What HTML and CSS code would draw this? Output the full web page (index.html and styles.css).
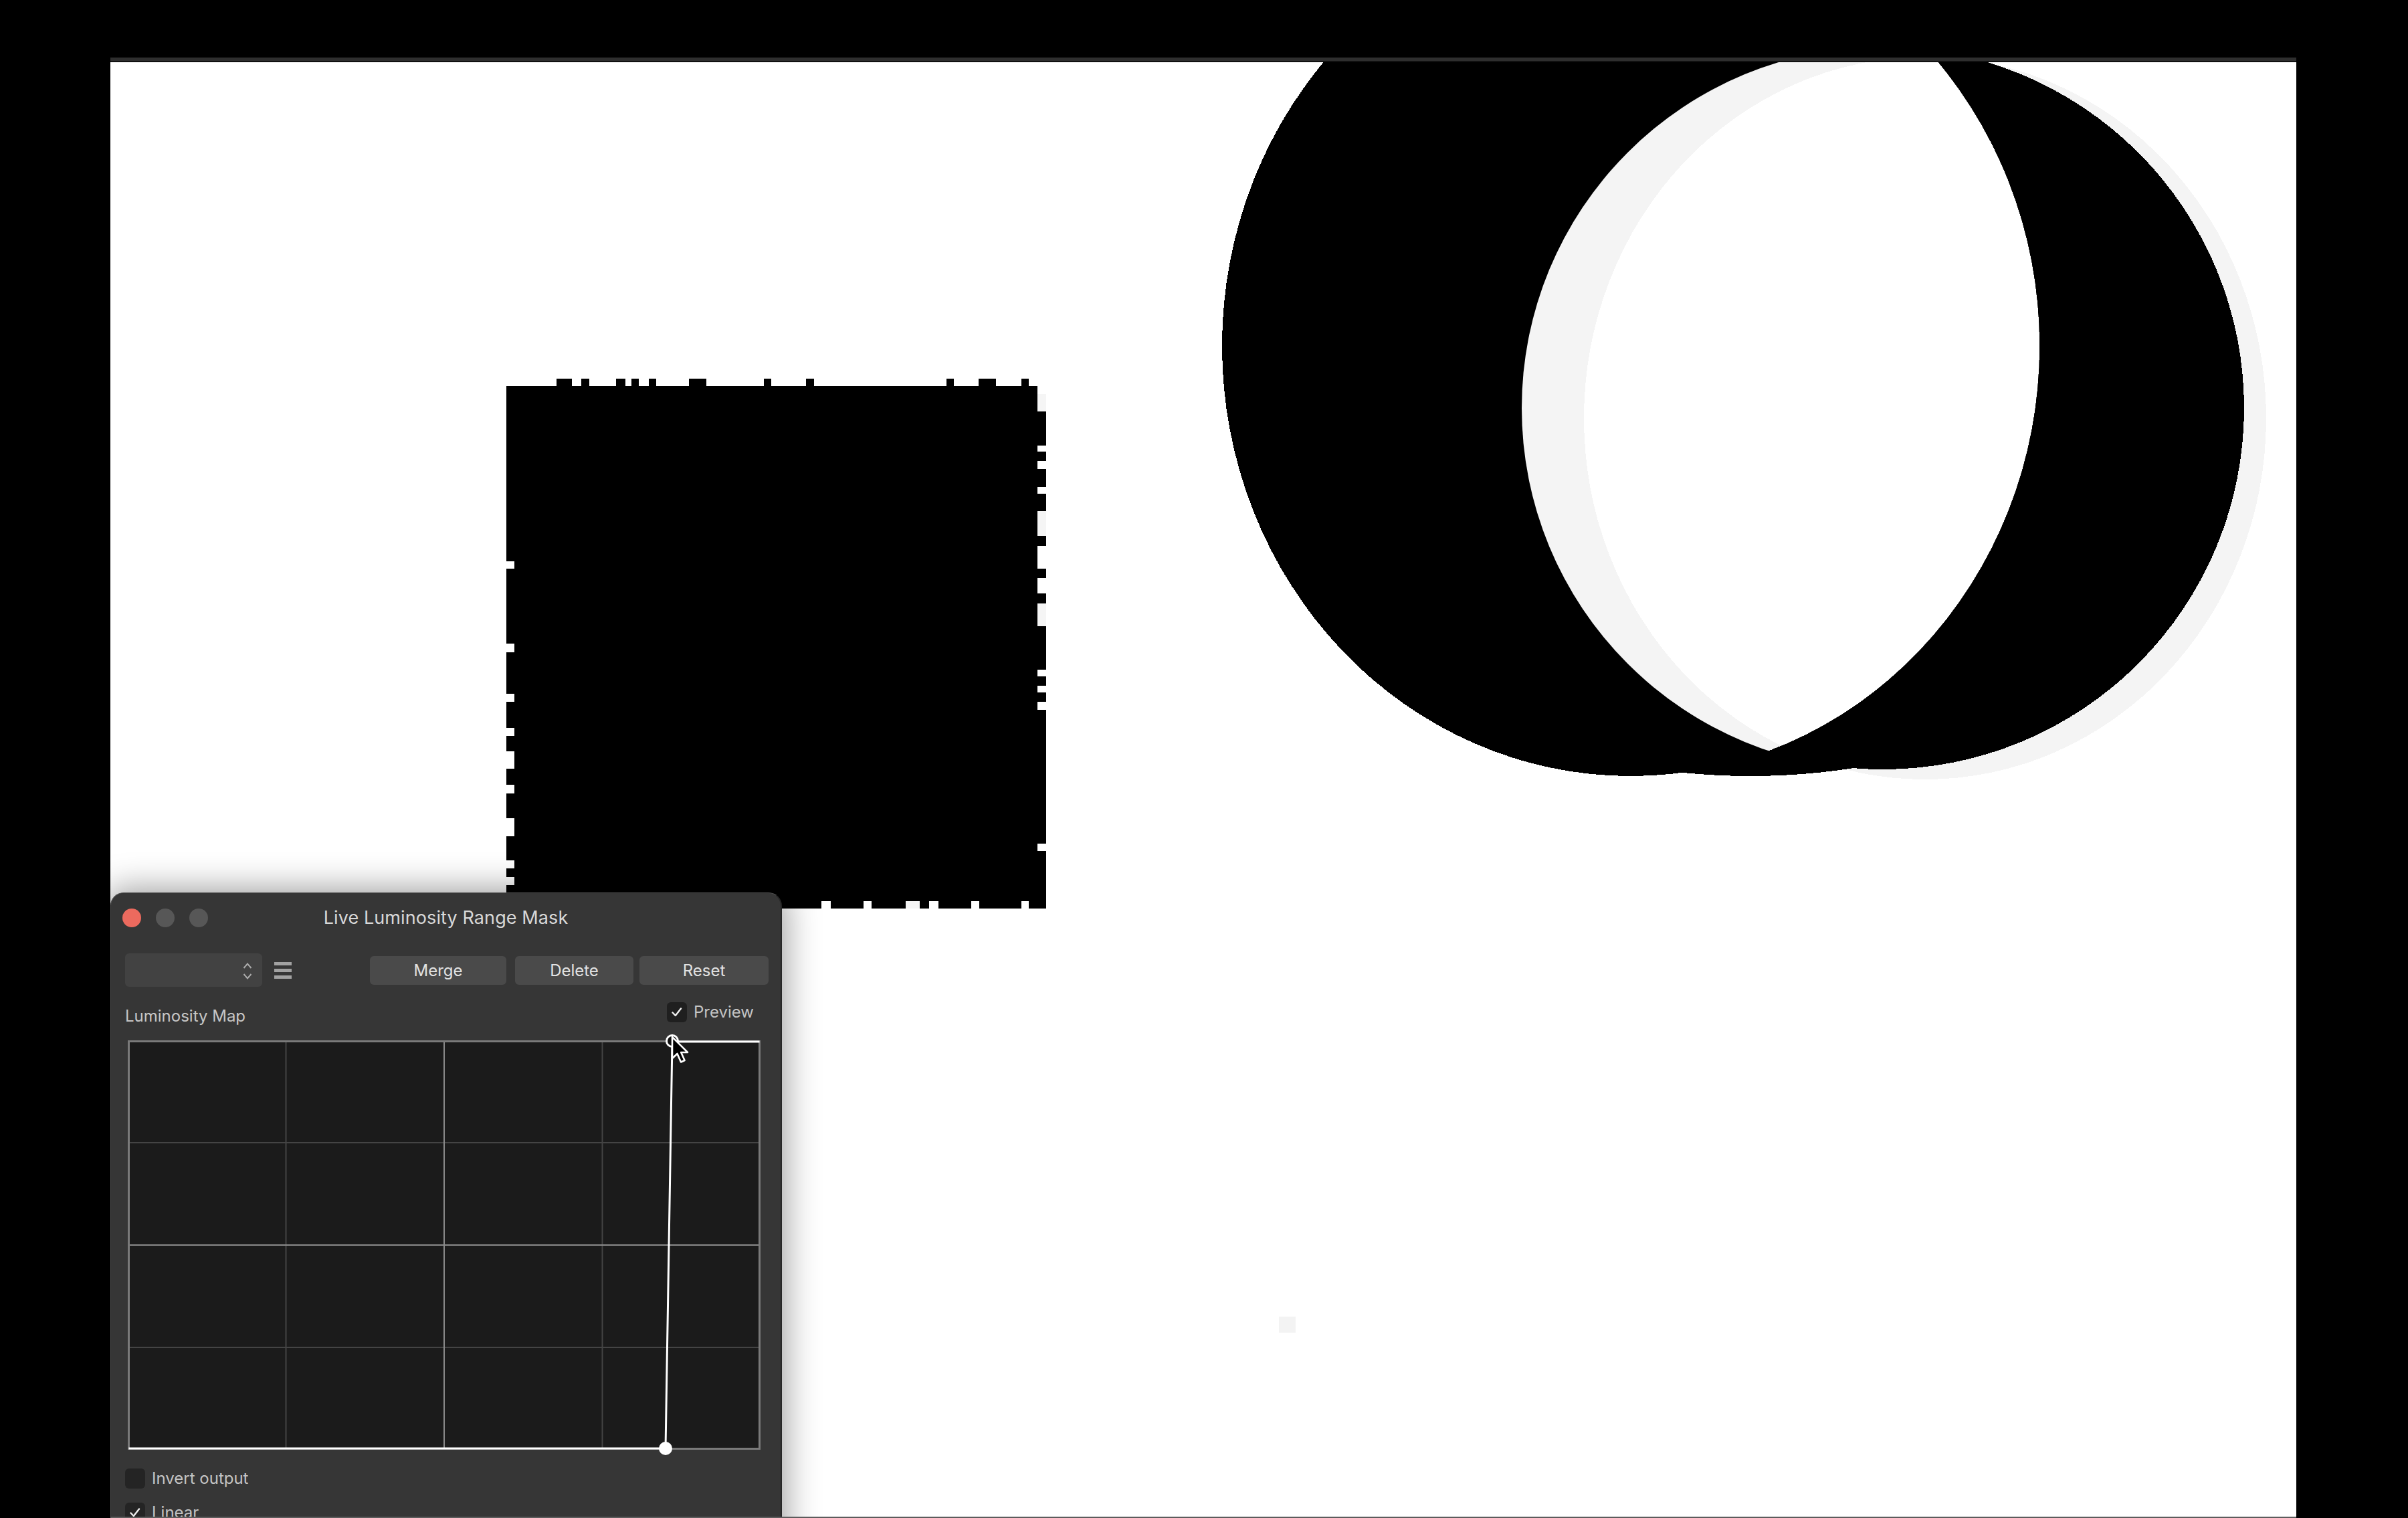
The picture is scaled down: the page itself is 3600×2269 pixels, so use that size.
FILE: index.html
```html
<!DOCTYPE html>
<html lang="en">
<head>
<meta charset="utf-8">
<title>Live Luminosity Range Mask</title>
<link rel="stylesheet" href="styles.css">
</head>
<body>
<div class="menubar"></div>
<div class="frame">
  <div class="canvas">
    <svg class="art" width="3268" height="2174" viewBox="165 93 3268 2174" xmlns="http://www.w3.org/2000/svg">
      <defs>
        <clipPath id="clipA"><ellipse cx="2438" cy="517" rx="611" ry="643"/></clipPath>
        <clipPath id="clipB"><ellipse cx="2815" cy="610" rx="540" ry="540"/></clipPath>
      </defs>
      <!-- square -->
      <g class="square" shape-rendering="crispEdges">
        <rect x="757" y="577" width="781" height="781" fill="#000"/>
        <rect x="1538" y="577" width="13" height="781" fill="#000"/>
        <rect x="1551" y="615" width="13" height="743" fill="#000"/>
        <rect x="1551" y="589" width="13" height="26" fill="#f5f5f5"/>
        <g fill="#000">
          <rect x="832" y="566" width="23" height="11"/>
          <rect x="869" y="566" width="12" height="11"/>
          <rect x="921" y="566" width="14" height="11"/>
          <rect x="944" y="566" width="11" height="11"/>
          <rect x="970" y="566" width="11" height="11"/>
          <rect x="1030" y="566" width="26" height="11"/>
          <rect x="1142" y="566" width="11" height="11"/>
          <rect x="1205" y="566" width="12" height="11"/>
          <rect x="1415" y="566" width="11" height="11"/>
          <rect x="1463" y="566" width="26" height="11"/>
          <rect x="1527" y="566" width="11" height="11"/>
        </g>
        <g fill="#fff">
          <rect x="1551" y="666" width="13" height="9"/>
          <rect x="1551" y="689" width="13" height="12"/>
          <rect x="1551" y="728" width="13" height="10"/>
          <rect x="1551" y="816" width="13" height="34"/>
          <rect x="1551" y="864" width="13" height="23"/>
          <rect x="1551" y="1001" width="13" height="10"/>
          <rect x="1551" y="1025" width="13" height="10"/>
          <rect x="1551" y="1049" width="13" height="12"/>
          <rect x="1551" y="1261" width="13" height="11"/>
          <rect x="757" y="839" width="12" height="11"/>
          <rect x="757" y="962" width="12" height="13"/>
          <rect x="757" y="1037" width="12" height="12"/>
          <rect x="757" y="1088" width="12" height="12"/>
          <rect x="757" y="1123" width="12" height="26"/>
          <rect x="757" y="1173" width="12" height="13"/>
          <rect x="757" y="1223" width="12" height="27"/>
          <rect x="757" y="1286" width="12" height="12"/>
          <rect x="757" y="1311" width="12" height="12"/>
          <rect x="1228" y="1347" width="14" height="11"/>
          <rect x="1291" y="1347" width="12" height="11"/>
          <rect x="1389" y="1347" width="14" height="11"/>
          <rect x="1452" y="1347" width="12" height="11"/>
          <rect x="1527" y="1347" width="11" height="11"/>
        </g>
        <g fill="#f5f5f5">
          <rect x="1551" y="764" width="13" height="37"/>
          <rect x="1551" y="902" width="13" height="34"/>
          <rect x="1354" y="1347" width="21" height="11"/>
        </g>
      </g>
      <!-- crescent -->
      <g shape-rendering="crispEdges">
        <ellipse cx="2878" cy="625" rx="510" ry="540" fill="#f4f4f4"/>
        <ellipse cx="2438" cy="517" rx="611" ry="643" fill="#000"/>
        <ellipse cx="2815" cy="610" rx="540" ry="540" fill="#000"/>
        <ellipse cx="2617" cy="884" rx="528" ry="276" fill="#000"/>
        <g clip-path="url(#clipB)">
          <ellipse cx="2438" cy="517" rx="611" ry="643" fill="#f4f4f4"/>
          <ellipse cx="2878" cy="625" rx="510" ry="540" fill="#fff" clip-path="url(#clipA)"/>
        </g>
      </g>
      <rect x="1912" y="1968" width="25" height="24" fill="#f3f3f3"/>
    </svg>

    <div class="panel">
      <div class="titlebar">
        <div class="lights">
          <span class="light close"></span>
          <span class="light"></span>
          <span class="light"></span>
        </div>
        <div class="title">Live Luminosity Range Mask</div>
        <div></div>
      </div>

      <div class="toolbar">
        <div class="popup">
          <svg class="stepper" width="14" height="50" viewBox="0 0 14 50">
            <path d="M1.5 22 L7 15.5 L12.5 22" fill="none" stroke="#a9a9a9" stroke-width="2"/>
            <path d="M1.5 31 L7 37.5 L12.5 31" fill="none" stroke="#a9a9a9" stroke-width="2"/>
          </svg>
        </div>
        <div class="menu-icon"><span></span><span></span><span></span></div>
        <div class="buttons">
          <button class="btn btn-merge">Merge</button>
          <button class="btn btn-delete">Delete</button>
          <button class="btn btn-reset">Reset</button>
        </div>
      </div>

      <div class="map-head">
        <div class="label">Luminosity Map</div>
        <div class="check-row">
          <span class="box">
            <svg width="30" height="30" viewBox="0 0 30 30"><path d="M8.5 15.5 L12.8 20 L21 9.5" fill="none" stroke="#efefef" stroke-width="2.4" stroke-linecap="round" stroke-linejoin="round"/></svg>
          </span>
          <span class="check-text">Preview</span>
        </div>
      </div>

      <div class="graph">
        <svg width="946" height="612" viewBox="0 0 946 612" class="graph-svg">
          <rect x="1.5" y="1.5" width="943" height="609" fill="#1b1b1b" stroke="#7a7a7a" stroke-width="3"/>
          <g stroke="#444" stroke-width="2">
            <line x1="236.5" y1="3" x2="236.5" y2="609"/>
            <line x1="709.5" y1="3" x2="709.5" y2="609"/>
            <line x1="3" y1="153" x2="943" y2="153"/>
            <line x1="3" y1="459" x2="943" y2="459"/>
          </g>
          <g stroke="#8a8a8a" stroke-width="2">
            <line x1="473" y1="3" x2="473" y2="609"/>
            <line x1="3" y1="306" x2="943" y2="306"/>
          </g>
          <polyline points="1.5,610 804,610 814,2 944.5,2" fill="none" stroke="#fff" stroke-width="3" stroke-linejoin="round"/>
          <circle cx="804" cy="610" r="10" fill="#fff"/>
          <circle cx="814" cy="1" r="8.5" fill="#111" stroke="#fff" stroke-width="3"/>
        </svg>
        <svg class="cursor" width="32" height="48" viewBox="0 0 32 48">
          <path d="M3 3 L3 35 L10.5 28 L16 40.5 L21.5 38 L16.2 26 L26 26 Z" fill="#000" stroke="#fff" stroke-width="2.6" stroke-linejoin="round"/>
        </svg>
      </div>

      <div class="opt opt-invert">
        <span class="box"></span>
        <span class="check-text">Invert output</span>
      </div>
      <div class="opt opt-linear">
        <span class="box">
          <svg width="30" height="30" viewBox="0 0 30 30"><path d="M8.5 15.5 L12.8 20 L21 9.5" fill="none" stroke="#efefef" stroke-width="2.4" stroke-linecap="round" stroke-linejoin="round"/></svg>
        </span>
        <span class="check-text">Linear</span>
      </div>
    </div>
  </div>
</div>
</body>
</html>
```

FILE: styles.css
```css
* { box-sizing: border-box; }

html, body {
  margin: 0;
  padding: 0;
  background: #000;
}

body {
  width: 3600px;
  height: 2269px;
  overflow: hidden;
  font-family: Inter, "Noto Sans", "Liberation Sans", sans-serif;
}

.menubar {
  height: 86px;
  background: #000;
}

.frame {
  margin-left: 165px;
  width: 3268px;
  border-top: 5px solid #2e2e2e;
}

.canvas {
  position: relative;
  height: 2178px;
  background: #fff;
  border-top: 2px solid #101010;
  border-bottom: 2px solid #5c5c5c;
  overflow: hidden;
}

.art {
  position: absolute;
  left: 0;
  top: 0;
  display: block;
}

/* floating window */
.panel {
  position: absolute;
  left: 0;
  top: 1241px;
  width: 1004px;
  height: 1000px;
  background: #363636;
  border: 1px solid #4e4e4e;
  border-right: 2px solid #262626;
  border-radius: 20px 20px 0 0;
  box-shadow: 0 0 50px 6px rgba(0, 0, 0, 0.38);
  padding: 0 18px 0 21px;
  display: flex;
  flex-direction: column;
  color: #c4c4c4;
}

.titlebar {
  height: 73px;
  margin: 0 -18px 0 -21px;
  padding: 0 17px;
  display: grid;
  grid-template-columns: 1fr auto 1fr;
  align-items: center;
}

.lights {
  display: flex;
  gap: 22px;
  align-items: center;
}

.light {
  width: 28px;
  height: 28px;
  border-radius: 50%;
  background: #575757;
}

.light.close {
  background: #ec6a5e;
}

.title {
  font-size: 27px;
  color: #d8d8d8;
  letter-spacing: 0.1px;
}

.toolbar {
  margin-top: 17px;
  height: 50px;
  display: flex;
  align-items: center;
}

.popup {
  width: 205px;
  height: 50px;
  background: #424242;
  border-radius: 6px;
  display: flex;
  justify-content: flex-end;
  padding-right: 15px;
}

.menu-icon {
  margin-left: 18px;
  width: 26px;
  display: flex;
  flex-direction: column;
  gap: 5px;
}

.menu-icon span {
  display: block;
  height: 5px;
  background: #a2a2a2;
}

.buttons {
  margin-left: auto;
  display: flex;
  align-items: center;
}

.btn {
  height: 43px;
  border: none;
  border-radius: 6px;
  background: #4a4a4a;
  color: #e2e2e2;
  font-family: inherit;
  font-size: 24px;
  padding: 0;
}

.btn-merge { width: 204px; }
.btn-delete { width: 177px; margin-left: 13px; }
.btn-reset { width: 193px; margin-left: 9px; }

.map-head {
  margin-top: 23px;
  display: flex;
  justify-content: space-between;
  align-items: flex-start;
}

.label {
  margin-top: 6px;
  font-size: 24px;
  line-height: 30px;
  color: #c6c6c6;
}

.check-row {
  margin-right: 22px;
  display: flex;
  align-items: center;
}

.box {
  width: 30px;
  height: 30px;
  border-radius: 6px;
  background: #1f1f1f;
  display: block;
  flex: none;
}

.box svg { display: block; }

.check-text {
  margin-left: 10px;
  font-size: 24px;
  line-height: 30px;
  color: #c4c4c4;
}

.graph {
  position: relative;
  margin-top: 21px;
  margin-left: 4px;
  width: 946px;
  height: 612px;
}

.graph-svg {
  display: block;
  overflow: visible;
}

.cursor {
  position: absolute;
  left: 811px;
  top: -8px;
}

.opt {
  display: flex;
  align-items: center;
  height: 31px;
}

.opt-invert { margin-top: 27px; }
.opt-linear { margin-top: 20px; }

.opt .box { background: #242424; }
```
